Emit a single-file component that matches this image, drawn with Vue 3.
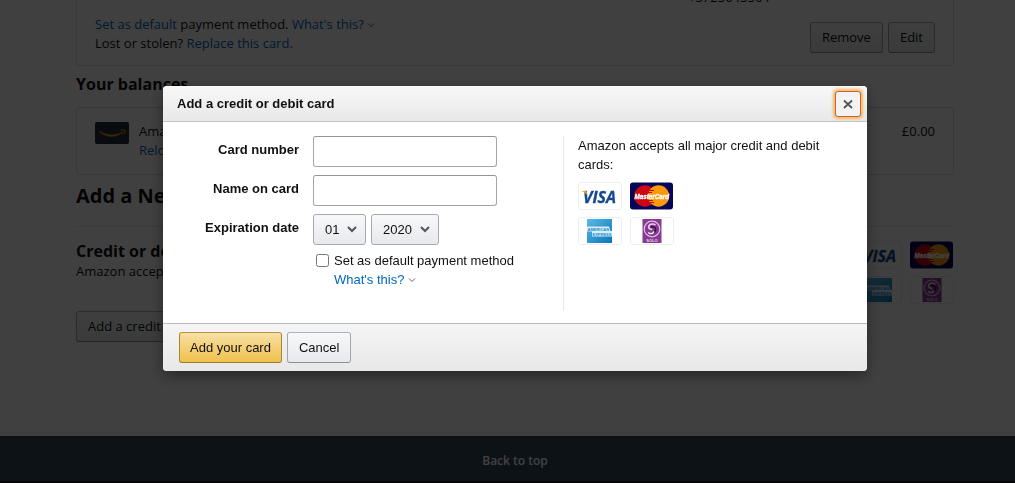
<script setup>
import { ref } from 'vue'

const cardNumber = ref('')
const cardName = ref('')
const month = ref('01')
const year = ref('2020')
const isDefault = ref(false)
const months = ['01', '02', '03', '04', '05', '06', '07', '08', '09', '10', '11', '12']
const years = ['2020', '2021', '2022', '2023', '2024', '2025']
</script>

<template>
  <div class="screen">
    <svg class="defs" aria-hidden="true">
      <defs>
        <linearGradient id="amexFill" x1="0" y1="0" x2="1" y2="1">
          <stop offset="0" stop-color="#5cb8e6" />
          <stop offset="1" stop-color="#0878b8" />
        </linearGradient>
        <symbol id="visa" viewBox="0 0 44 28">
          <rect x=".5" y=".5" width="43" height="27" rx="2.5" fill="#fff" stroke="#eee" />
          <text x="5" y="20.5" font-family="Open Sans, sans-serif" font-size="16" font-weight="700" font-style="italic" fill="#16478f" stroke="#16478f" stroke-width=".3">VISA</text>
          <path d="M3 9h5.2l2 5.500C8.500 11.500 6 10 3 9z" fill="#e6a52c" />
        </symbol>
        <symbol id="mastercard" viewBox="0 0 44 28">
          <rect y=".5" width="43" height="27" rx="3" fill="#060658" />
          <circle cx="15" cy="14" r="10.700" fill="#cc0713" />
          <circle cx="28.500" cy="14" r="10.700" fill="#fd9a0c" />
          <path d="M19 8.500h5M18 10.500h4M18 18.500h5M19 20.500h5" stroke="#cc0713" />
          <text x="4.500" y="16.500" font-family="Liberation Sans, sans-serif" font-size="6.300" font-weight="700" font-style="italic" fill="#fff" stroke="#fff" stroke-width=".3">MasterCard</text>
        </symbol>
        <symbol id="amex" viewBox="0 0 44 28">
          <rect x=".5" y=".5" width="43" height="27" rx="2.5" fill="#fff" stroke="#eee" />
          <rect x="9" y="2" width="25" height="24" fill="url(#amexFill)" />
          <path d="M9 9.500h22l1.500 4.500h1.500v5.500H14v-5H9z" fill="#d8eef9" />
          <text x="9.500" y="13.700" font-family="Liberation Sans, sans-serif" font-size="4" font-weight="700" fill="#218bc7">AMERICAN</text>
          <text x="14.500" y="18.500" font-family="Liberation Sans, sans-serif" font-size="4" font-weight="700" fill="#218bc7">EXPRESS</text>
        </symbol>
        <symbol id="solo" viewBox="0 0 44 28">
          <rect x=".5" y=".5" width="43" height="27" rx="2.5" fill="#fff" stroke="#eee" />
          <rect x="12.500" y="2" width="19" height="24" fill="#873a92" />
          <circle cx="22" cy="12" r="7.800" fill="none" stroke="#dfb9e2" stroke-width="1.200" />
          <path d="M25.500 8c-3-2-7-.5-6.800 2.200.2 1.800 2 2.300 3.600 2.300" fill="none" stroke="#e9cdec" stroke-width="1.600" />
          <path d="M20.500 10c3-1 5.500.5 5 3.200-.4 2.500-3.600 3.800-6 2.800" fill="none" stroke="#35103e" stroke-width="1.500" />
          <path d="M18.300 15.500c2 1.800 5 1.200 5.500-1" fill="none" stroke="#fff" stroke-width="1.400" />
          <text x="16.300" y="25" font-family="Liberation Sans, sans-serif" font-size="4" font-weight="700" fill="#ecd5ee">SOLO</text>
        </symbol>
        <symbol id="chevron" viewBox="0 0 8 6">
          <path d="M1 1.500l3 3 3-3" fill="none" stroke="#666" />
        </symbol>
      </defs>
    </svg>

    <div class="page">
      <main class="container">
        <section class="box saved">
          <p class="phone">+3725645564</p>
          <div class="saved-row">
            <div>
              <p><a href="#">Set as default</a> payment method. <a href="#">What's this?</a> <svg class="chev"><use href="#chevron" /></svg></p>
              <p>Lost or stolen? <a href="#">Replace this card.</a></p>
            </div>
            <div class="actions">
              <button class="btn" type="button">Remove</button>
              <button class="btn" type="button">Edit</button>
            </div>
          </div>
        </section>
        <h2 class="balances-title">Your balances</h2>
        <section class="box balance">
          <svg class="gift" viewBox="0 0 34 22" aria-hidden="true">
            <rect width="34" height="22" rx="2" fill="#232f3e" />
            <path d="M4 9c8 5 17 5 24 1-6 5.500-17 6.500-24-1z" fill="#ff9900" stroke="#ff9900" stroke-width=".6" />
            <path d="M25.500 8.500c2-.8 4-.7 4.500-.2s-.3 2.700-1.700 4" fill="none" stroke="#ff9900" />
          </svg>
          <div class="balance-name">
            <p>Amazon Gift Card Balance</p>
            <p><a href="#">Reload your balance</a></p>
          </div>
          <p>£0.00</p>
        </section>
        <h1>Add a New Payment Method</h1>
        <section class="methods">
          <div>
            <h2>Credit or debit cards</h2>
            <p class="accepts">Amazon accepts all major credit and debit cards</p>
            <button class="btn" type="button">Add a credit or debit card</button>
          </div>
          <div class="brands">
            <svg viewBox="0 0 44 28" role="img" aria-label="Visa"><use href="#visa" /></svg>
            <svg viewBox="0 0 44 28" role="img" aria-label="MasterCard"><use href="#mastercard" /></svg>
            <svg viewBox="0 0 44 28" role="img" aria-label="American Express"><use href="#amex" /></svg>
            <svg viewBox="0 0 44 28" role="img" aria-label="Solo"><use href="#solo" /></svg>
          </div>
        </section>
      </main>
      <footer class="to-top"><a href="#">Back to top</a></footer>
    </div>

    <div class="overlay">
      <form class="dialog" role="dialog" aria-labelledby="dialog-title" @submit.prevent>
        <header class="dialog-head">
          <h3 id="dialog-title">Add a credit or debit card</h3>
          <button class="close" type="button" aria-label="Close">
            <svg viewBox="0 0 10 10"><path d="M1 1.500l8 7.500M9 1.500l-8 7.500" stroke="#555" stroke-width="1.800" /></svg>
          </button>
        </header>
        <div class="dialog-body">
          <div class="fields">
            <label for="number">Card number</label>
            <input id="number" v-model="cardNumber" class="text" type="text">
            <label for="name">Name on card</label>
            <input id="name" v-model="cardName" class="text" type="text">
            <label for="month">Expiration date</label>
            <div class="selects">
              <div class="pick month">
                <select id="month" v-model="month"><option v-for="m in months" :key="m">{{ m }}</option></select>
                <svg viewBox="0 0 10 7"><path d="M1 1l4 4 4-4" fill="none" stroke="#555" stroke-width="2" /></svg>
              </div>
              <div class="pick year">
                <select v-model="year" aria-label="Expiration year"><option v-for="y in years" :key="y">{{ y }}</option></select>
                <svg viewBox="0 0 10 7"><path d="M1 1l4 4 4-4" fill="none" stroke="#555" stroke-width="2" /></svg>
              </div>
            </div>
            <div class="default">
              <input id="default" v-model="isDefault" type="checkbox">
              <div>
                <label for="default">Set as default payment method</label>
                <p><a href="#">What's this?</a> <svg class="chev"><use href="#chevron" /></svg></p>
              </div>
            </div>
          </div>
          <aside>
            <p>Amazon accepts all major credit and debit cards:</p>
            <div class="brands">
              <svg viewBox="0 0 44 28" role="img" aria-label="Visa"><use href="#visa" /></svg>
              <svg viewBox="0 0 44 28" role="img" aria-label="MasterCard"><use href="#mastercard" /></svg>
              <svg viewBox="0 0 44 28" role="img" aria-label="American Express"><use href="#amex" /></svg>
              <svg viewBox="0 0 44 28" role="img" aria-label="Solo"><use href="#solo" /></svg>
            </div>
          </aside>
        </div>
        <footer class="dialog-foot">
          <button class="btn primary" type="submit">Add your card</button>
          <button class="btn" type="button">Cancel</button>
        </footer>
      </form>
    </div>
  </div>
</template>

<style>
body { margin: 0; background: #fff; overflow: hidden; }
</style>

<style scoped>
* { box-sizing: border-box; }
h1, h2, h3, p { margin: 0; }
a { color: #0066c0; text-decoration: none; }
.defs { position: absolute; width: 0; height: 0; }
.screen { font-size: 13px; line-height: 19px; color: #111; }
.page { display: flex; flex-direction: column; min-height: 100vh; font-family: "Open Sans", "Noto Sans", sans-serif; }
.container { flex: 1; width: 100%; max-width: 893px; margin: 0 auto; padding-left: 15px; }
.box { border: 1px solid #ddd; border-radius: 4px; padding: 0 18px; }
.saved { border-top: 0; border-radius: 0 0 4px 4px; padding-bottom: 12px; }
.phone { height: 7px; line-height: 7px; margin: -6px 0 14px; padding-left: 593px; }
.saved-row { display: flex; justify-content: space-between; align-items: flex-end; }
.chev { width: 8px; height: 6px; vertical-align: 1px; }
.actions { display: flex; gap: 5px; }
.btn { height: 31px; padding: 0 11px; border: 1px solid; border-color: #adb1b8 #a2a6ac #8d9096; border-radius: 3px; background: linear-gradient(#f7f8fa, #e7e9ec); color: #111; font: inherit; }
h2 { font-size: 16px; line-height: 21px; }
.balances-title { margin: 8px 0 12px; }
.balance { display: flex; align-items: flex-start; padding-top: 14px; height: 68px; }
.gift { width: 34px; height: 22px; margin-right: 10px; }
.balance-name { flex: 1; }
h1 { font-size: 20px; line-height: 28px; margin: 7px 0 16px; }
.methods { display: flex; justify-content: space-between; border-top: 1px solid #e7e7e7; padding-top: 14px; }
.accepts { margin-bottom: 30px; }
.brands { display: grid; grid-template-columns: 44px 44px; gap: 7px 8px; align-content: start; }
.brands svg { width: 44px; height: 28px; }
.to-top { height: 47px; padding: 15px 0 0 15px; border-bottom: 2px solid #131a22; background: #37475a; text-align: center; }
.to-top a { color: #fff; font-size: 12px; font-weight: 600; }
.overlay { position: fixed; inset: 0; display: flex; justify-content: center; align-items: flex-start; padding: 86px 0 0 15px; background: rgba(0, 0, 0, .75); }
.dialog { width: 704px; max-width: 100%; border-radius: 4px; overflow: hidden; background: #fff; box-shadow: 0 5px 15px rgba(0, 0, 0, .4); font-family: "Liberation Sans", Arial, sans-serif; }
.dialog-head { display: flex; justify-content: space-between; align-items: center; height: 36px; padding: 0 6px 0 14px; border-bottom: 1px solid #c4c4c4; background: linear-gradient(#f8f8f8, #e8e8e8); }
h3 { font-size: 13px; line-height: 19px; }
.close { width: 26px; height: 26px; padding: 0; border: 1px solid #c7681c; border-radius: 3px; background: #f3f3f3; box-shadow: 0 0 3px 2px #f8b56c; display: grid; place-items: center; }
.close svg { width: 10px; height: 10px; }
.dialog-body { display: flex; padding: 14px 16px 12px 14px; }
.fields { flex: 1; display: grid; grid-template-columns: 122px 184px; gap: 8px 14px; align-content: start; }
.fields > label { text-align: right; font-weight: 700; padding-top: 4px; }
.text { height: 31px; width: 100%; padding: 3px 7px; border: 1px solid #a6a6a6; border-top-color: #949494; border-radius: 3px; background: #fff; font: inherit; }
.selects { display: flex; gap: 5px; }
.pick { position: relative; }
.month { width: 53px; }
.year { width: 68px; }
.pick select { appearance: none; width: 100%; height: 31px; padding: 0 11px; border: 1px solid #a6a9b0; border-radius: 3px; background: linear-gradient(#f7f8fa, #e7e9ec); color: #111; font: inherit; }
.pick svg { position: absolute; right: 9px; top: 12px; width: 10px; height: 7px; pointer-events: none; }
.default { grid-column: 2 / 3; display: flex; gap: 5px; padding-left: 3px; margin-top: -2px; white-space: nowrap; }
.default input { flex: none; width: 13px; height: 13px; margin: 3px 0 0; }
aside { width: 288px; min-height: 175px; padding-left: 14px; border-left: 1px solid #e7e7e7; }
aside p { margin-bottom: 8px; padding-right: 16px; }
.dialog-foot { display: flex; gap: 5px; height: 48px; padding: 8px 16px; border-top: 1px solid #bbb; background: linear-gradient(#f5f5f5, #e8e8e8); }
.primary { padding: 0 10px; border-color: #b99440 #a88734 #9c7e31; background: linear-gradient(#f7dfa5, #f0c14b); }
</style>
